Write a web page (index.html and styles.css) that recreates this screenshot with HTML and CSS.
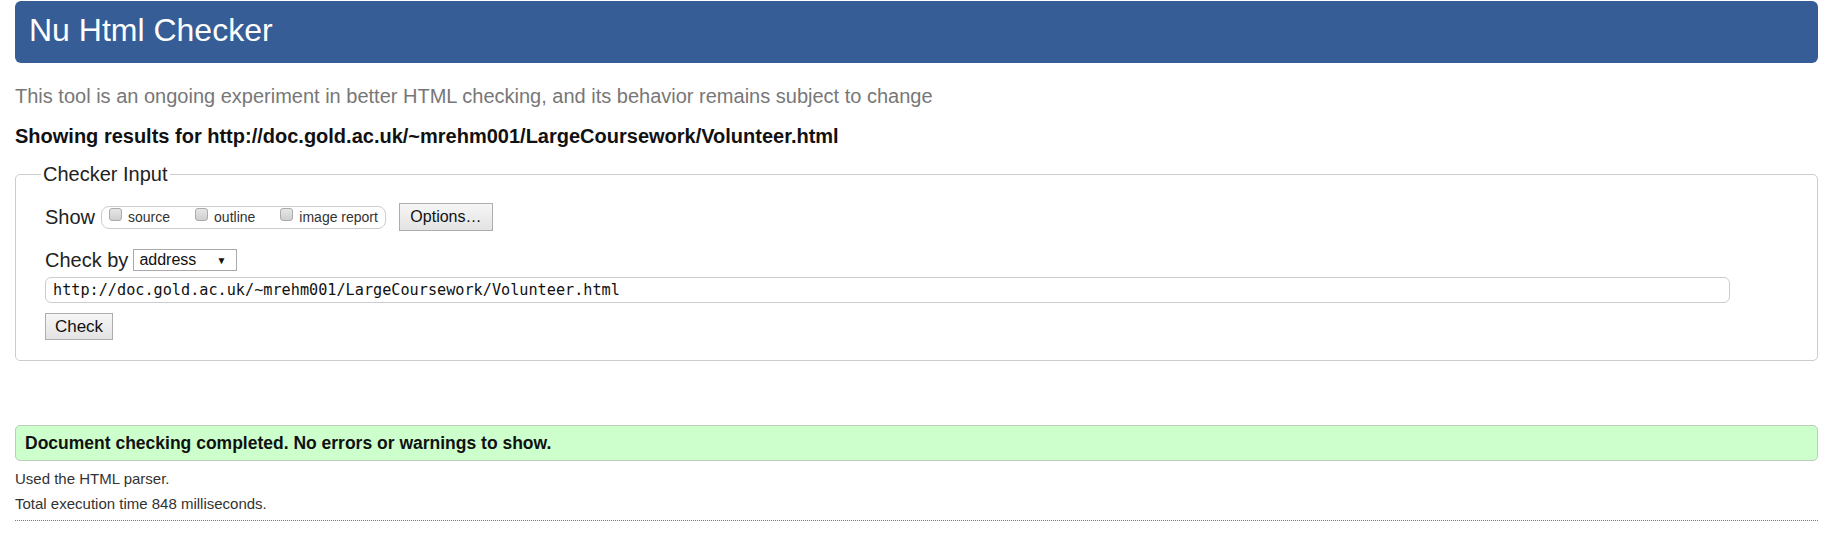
FILE: index.html
```html
<!DOCTYPE html>
<html>
<head>
<meta charset="utf-8">
<title>Nu Html Checker</title>
<link rel="stylesheet" href="styles.css">
</head>
<body>
<header class="banner"><h1 class="title">Nu Html Checker</h1></header>
<p class="intro">This tool is an ongoing experiment in better HTML checking, and its behavior remains subject to change</p>
<p class="results-for">Showing results for http://doc.gold.ac.uk/~mrehm001/LargeCoursework/Volunteer.html</p>
<fieldset class="input-box">
  <legend class="legend">Checker Input</legend>
  <div class="row show-row">
    <span class="label">Show</span>
    <span class="show-group">
      <label class="opt"><span class="cb"></span>source</label>
      <label class="opt"><span class="cb"></span>outline</label>
      <label class="opt"><span class="cb"></span>image report</label>
    </span>
    <span class="btn options">Options…</span>
  </div>
  <div class="row by-row">
    <span class="label">Check by</span>
    <span class="select">address<span class="arrow">▼</span></span>
  </div>
  <div class="url">http://doc.gold.ac.uk/~mrehm001/LargeCoursework/Volunteer.html</div>
  <div class="row"><span class="btn check">Check</span></div>
</fieldset>
<div class="success">Document checking completed. No errors or warnings to show.</div>
<p class="meta first">Used the HTML parser.</p>
<p class="meta">Total execution time 848 milliseconds.</p>
<div class="rule"></div>
</body>
</html>
```
FILE: styles.css
```css
html, body { margin: 0; padding: 0; background: #fff; }
body {
  font-family: "Liberation Sans", Arial, sans-serif;
  color: #111;
  padding: 1px 22px 0 15px;
}
.banner {
  background: #365d95;
  border-radius: 6px;
  height: 62px;
  display: flex;
  align-items: center;
}
.title {
  margin: 0;
  padding-left: 14px;
  font-weight: normal;
  font-size: 32px;
  color: #fff;
  line-height: 1;
  position: relative;
  top: -2px;
}
.intro {
  margin: 21px 0 0 0;
  font-size: 20px;
  line-height: 24px;
  color: #777;
}
.results-for {
  margin: 16px 0 0 0;
  font-size: 20px;
  line-height: 24px;
  font-weight: bold;
  color: #111;
}
.input-box {
  margin: 14px 0 0 0;
  border: 1px solid #ccc;
  border-radius: 5px;
  padding: 16px 29px 20px 29px;
  min-width: 0;
}
.legend {
  font-size: 20px;
  padding: 0 2px;
  margin-left: -4px;
  color: #222;
  line-height: 24px;
}
.row { display: flex; align-items: center; }
.label { font-size: 20px; color: #222; }
.show-row { height: 30px; }
.show-group {
  display: inline-flex;
  align-items: center;
  border: 1px solid #ccc;
  border-radius: 8px;
  height: 23px;
  box-sizing: border-box;
  margin-left: 6px;
  padding: 0 7px 0 7px;
  font-size: 14px;
  color: #333;
}
.opt { display: inline-flex; align-items: center; margin-right: 25px; }
.opt:last-child { margin-right: 0; }
.cb {
  width: 11px; height: 11px;
  border: 1px solid #aaa;
  border-radius: 3px;
  background: linear-gradient(#e6e6e6, #cfcfcf);
  margin-right: 6px;
  position: relative; top: -3px;
}
.btn {
  display: inline-flex;
  align-items: center;
  justify-content: center;
  border: 1px solid #adadad;
  background: linear-gradient(#f6f6f6, #e3e3e3);
  font-size: 16px;
  color: #111;
  box-sizing: border-box;
}
.options { margin-left: 13px; width: 94px; height: 28px; }
.by-row { height: 24px; margin-top: 16px; }
.select {
  display: inline-flex;
  align-items: center;
  border: 1px solid #aaa;
  height: 22px;
  box-sizing: border-box;
  width: 104px;
  margin-left: 5px;
  padding-left: 5px;
  font-size: 16px;
  color: #111;
}
.arrow {
  font-size: 10px;
  margin-left: auto;
  margin-right: 10px;
}
.url {
  margin: 5px 0 0 0;
  width: 1685px;
  height: 26px;
  box-sizing: border-box;
  border: 1px solid #ccc;
  border-radius: 6px;
  padding: 0 7px;
  font-family: "DejaVu Sans Mono", "Liberation Mono", monospace;
  font-size: 15.2px;
  line-height: 24px;
  color: #111;
}
.check { margin-top: 10px; width: 68px; height: 27px; font-size: 17px; }
.success {
  margin-top: 64px;
  height: 36px;
  box-sizing: border-box;
  background: #ccffcc;
  border: 1px solid #bbccbb;
  border-radius: 5px;
  font-weight: bold;
  font-size: 17.5px;
  display: flex;
  align-items: center;
  padding-left: 9px;
  color: #111;
}
.meta {
  margin: 0;
  font-size: 15px;
  color: #333;
  line-height: 25px;
}
.meta.first { margin-top: 5px; }
.rule {
  margin-top: 4px;
  border-top: 1px dotted #777;
}
```
